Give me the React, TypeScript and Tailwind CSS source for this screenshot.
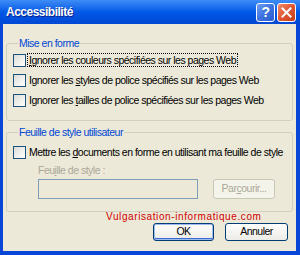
import React from 'react';

const Checkbox = () => (
  <div className="w-[13px] h-[13px] shrink-0 border border-[#1C5180] bg-gradient-to-br from-[#DCDCD7] to-white" />
);

const CheckRow = ({ children, focused }: { children: React.ReactNode; focused?: boolean }) => (
  <div className="h-[20px] flex items-center">
    <Checkbox />
    <span
      className={`ml-[1px] px-[1px] leading-[12px] border ${
        focused ? 'border-dotted border-black' : 'border-transparent'
      }`}
    >
      {children}
    </span>
  </div>
);

const TitleButton = ({ kind }: { kind: 'help' | 'close' }) => (
  <div
    className={`w-[19px] h-[19px] rounded-[3px] border border-white flex items-center justify-center ${
      kind === 'help'
        ? 'bg-gradient-to-br from-[#6F9CF5] via-[#3E73E0] to-[#2A5BD0]'
        : 'bg-gradient-to-br from-[#F08A6A] via-[#E0542F] to-[#C8401E]'
    }`}
  >
    {kind === 'help' ? (
      <span className="text-white font-bold text-[14px] leading-none">?</span>
    ) : (
      <svg width="11" height="11" viewBox="0 0 11 11">
        <path d="M1.5 1.5 L9.5 9.5 M9.5 1.5 L1.5 9.5" stroke="white" strokeWidth="2" strokeLinecap="square" />
      </svg>
    )}
  </div>
);

export default function App() {
  return (
    <div
      className="relative w-[300px] h-[255px] flex flex-col bg-[#0846D8] text-[10.5px] tracking-[-0.5px] text-black"
      style={{ fontFamily: '"Liberation Sans", Arial, sans-serif' }}
    >
      {/* barre de titre */}
      <div className="h-[24px] shrink-0 flex items-center pl-[6px] pr-[4px] bg-gradient-to-b from-[#3D8CF7] via-[#0058E6] to-[#0048D4]">
        <span className="flex-1 text-white font-bold text-[12px] tracking-[-0.5px] [text-shadow:1px_1px_0_#0A1E8C]">
          Accessibilité
        </span>
        <div className="flex gap-[2px]">
          <TitleButton kind="help" />
          <TitleButton kind="close" />
        </div>
      </div>

      {/* contenu */}
      <div className="flex-1 ml-[3px] mr-[4px] mb-[4px] bg-[#ECE9D8] px-[3px] pt-[13px] flex flex-col">
        <fieldset className="border border-[#D0D0BF] rounded-[3px] pl-[6px] pb-[10px]">
          <legend className="ml-[5px] px-[1px] leading-[13px] text-[#0046D5]">Mise en forme</legend>
          <CheckRow focused>
            <u>I</u>gnorer les couleurs spécifiées sur les pages Web
          </CheckRow>
          <CheckRow>
            Ignorer les <u>s</u>tyles de police spécifiés sur les pages Web
          </CheckRow>
          <CheckRow>
            Ignorer les <u>t</u>ailles de police spécifiées sur les pages Web
          </CheckRow>
        </fieldset>

        <fieldset className="mt-[5px] border border-[#D0D0BF] rounded-[3px] pl-[6px] pb-[12px] pt-[3px]">
          <legend className="ml-[5px] px-[1px] leading-[13px] text-[#0046D5]">Feuille de style utilisateur</legend>
          <CheckRow>
            Mettre les <u>d</u>ocuments en forme en utilisant ma feuille de style
          </CheckRow>
          <div className="pl-[25px] mt-[1px] leading-[14px] text-[#ACA899]">
            Feu<u>i</u>lle de style :
          </div>
          <div className="pl-[25px] mt-[2px] flex gap-[15px]">
            <div className="w-[160px] h-[20px] border border-[#7F9DB9] bg-[#ECE9D8]" />
            <div className="w-[62px] h-[20px] rounded-[3px] border border-[#C9C7BA] bg-[#F5F4EA] text-[#ACA899] flex items-center justify-center">
              Par<u>c</u>ourir...
            </div>
          </div>
        </fieldset>

        <div className="mt-[11px] mr-[5px] flex justify-end gap-[11px]">
          <div className="w-[61px] h-[18px] rounded-[3px] border border-[#003C74] bg-gradient-to-b from-white to-[#ECEBE6] flex items-center justify-center shadow-[inset_0_0_0_1px_#9DBCF0,inset_0_-1px_0_1px_#3D6CD0]">
            OK
          </div>
          <div className="w-[63px] h-[18px] rounded-[3px] border border-[#003C74] bg-gradient-to-b from-white to-[#ECEBE6] flex items-center justify-center">
            Annuler
          </div>
        </div>
      </div>

      {/* filigrane */}
      <span
        className="absolute left-[106px] top-[211px] text-[10px] leading-[12px] tracking-[0.6px] text-[#D00000]"
        style={{ fontFamily: '"Liberation Sans", Arial, sans-serif' }}
      >
        Vulgarisation-informatique.com
      </span>
    </div>
  );
}
